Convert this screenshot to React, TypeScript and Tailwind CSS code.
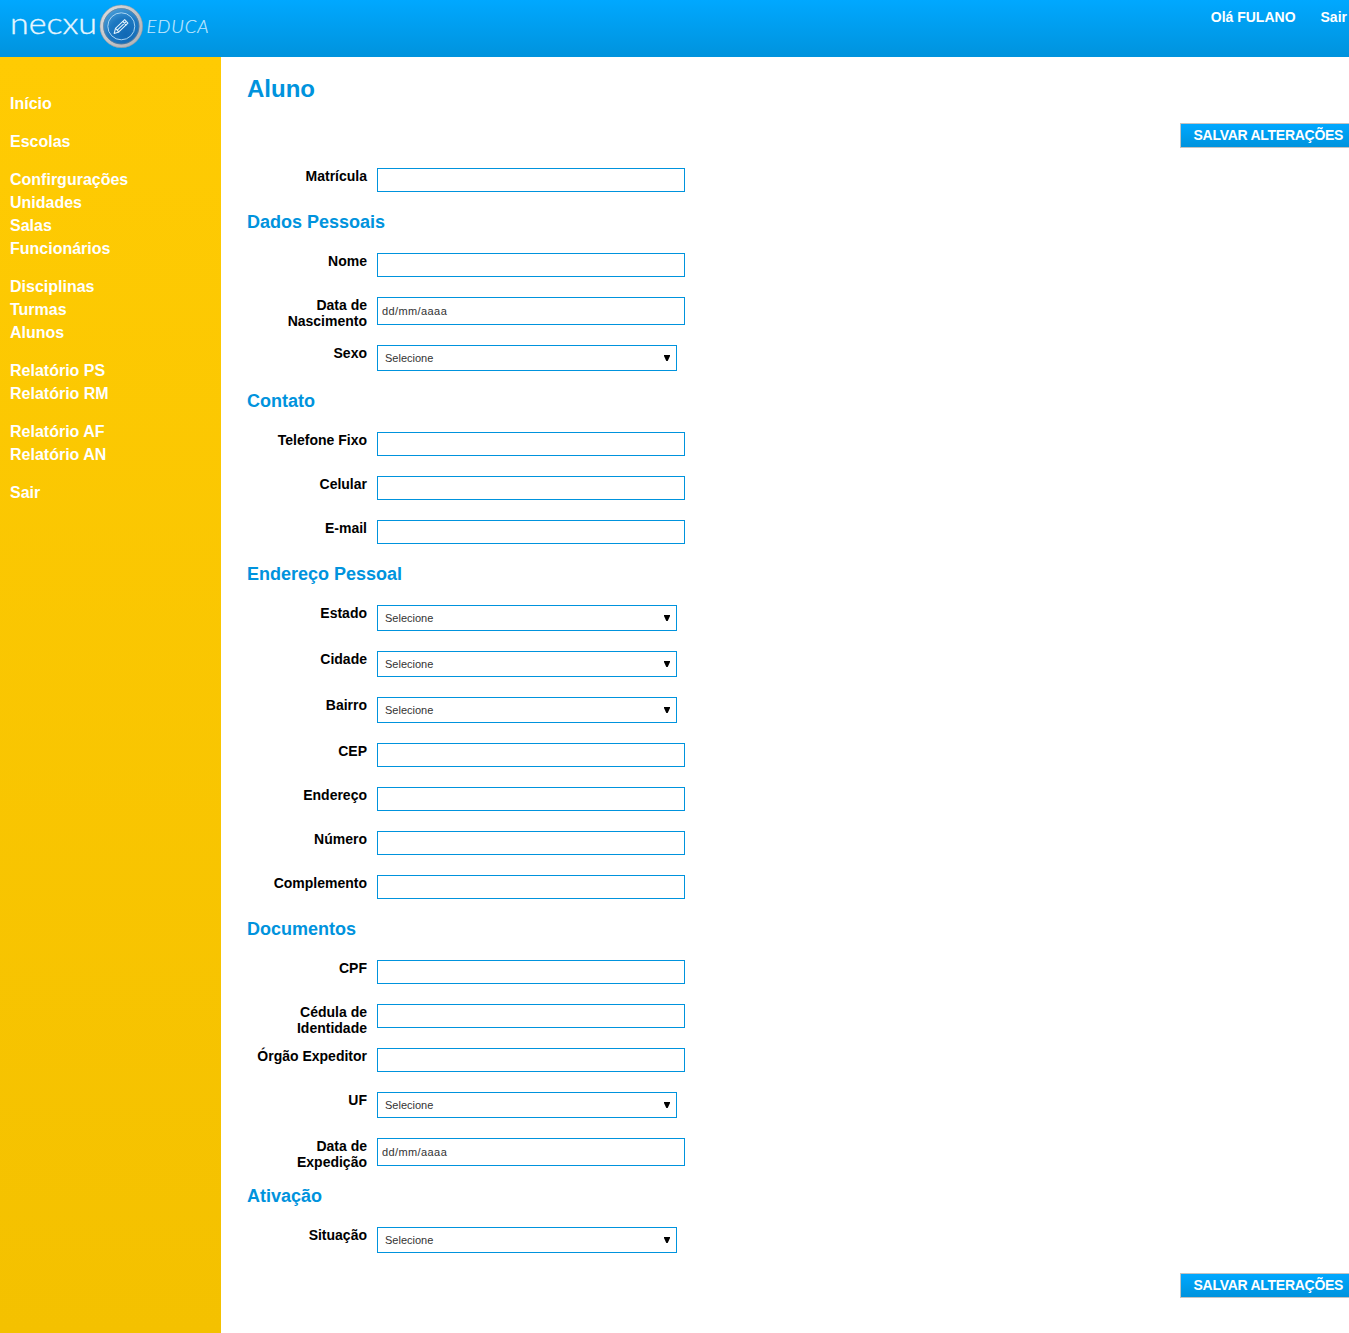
import React from "react";

type Kind = "text" | "date" | "select";
type FieldDef = { label: string; kind?: Kind };

const menu: string[][] = [
  ["Início"],
  ["Escolas"],
  ["Confirgurações", "Unidades", "Salas", "Funcionários"],
  ["Disciplinas", "Turmas", "Alunos"],
  ["Relatório PS", "Relatório RM"],
  ["Relatório AF", "Relatório AN"],
  ["Sair"],
];

const sections: { title?: string; fields: FieldDef[] }[] = [
  { fields: [{ label: "Matrícula" }] },
  {
    title: "Dados Pessoais",
    fields: [
      { label: "Nome" },
      { label: "Data de Nascimento", kind: "date" },
      { label: "Sexo", kind: "select" },
    ],
  },
  {
    title: "Contato",
    fields: [{ label: "Telefone Fixo" }, { label: "Celular" }, { label: "E-mail" }],
  },
  {
    title: "Endereço Pessoal",
    fields: [
      { label: "Estado", kind: "select" },
      { label: "Cidade", kind: "select" },
      { label: "Bairro", kind: "select" },
      { label: "CEP" },
      { label: "Endereço" },
      { label: "Número" },
      { label: "Complemento" },
    ],
  },
  {
    title: "Documentos",
    fields: [
      { label: "CPF" },
      { label: "Cédula de Identidade" },
      { label: "Órgão Expeditor" },
      { label: "UF", kind: "select" },
      { label: "Data de Expedição", kind: "date" },
    ],
  },
  { title: "Ativação", fields: [{ label: "Situação", kind: "select" }] },
];

function Logo() {
  return (
    <svg width="221" height="57" viewBox="0 0 221 57" className="shrink-0">
      <defs>
        <linearGradient id="rim" x1="0" y1="0" x2="1" y2="1">
          <stop offset="0" stopColor="#dededf" />
          <stop offset="0.5" stopColor="#c4c5c8" />
          <stop offset="1" stopColor="#b0b1b5" />
        </linearGradient>
        <radialGradient id="disc" cx="0.62" cy="0.72" r="0.72">
          <stop offset="0" stopColor="#1068b4" />
          <stop offset="0.6" stopColor="#1d78c1" />
          <stop offset="1" stopColor="#4a9ed8" />
        </radialGradient>
      </defs>
      <text
        x="10"
        y="34"
        textLength="87"
        lengthAdjust="spacingAndGlyphs"
        fill="#e6f6ff"
        stroke="#e6f6ff"
        strokeWidth="0.35"
        className="font-[Lato] text-[28.5px] font-light"
      >
        necxu
      </text>
      <circle cx="121.3" cy="26.3" r="19.7" fill="url(#disc)" stroke="url(#rim)" strokeWidth="3.4" />
      <circle cx="121.3" cy="26.3" r="21.3" fill="none" stroke="#8f9196" strokeWidth="0.5" />
      <circle cx="121.3" cy="26.3" r="17.7" fill="none" stroke="#6a7f96" strokeWidth="0.7" />
      <circle cx="121.3" cy="26.3" r="13.5" fill="none" stroke="#a9d5f3" strokeWidth="1" />
      <g fill="none" stroke="#e2f2fc" strokeWidth="1.1" strokeLinejoin="round" strokeLinecap="round">
        <path d="M114.2 33.4l1.3-5 9.2-8.7 3.2 3.4-9.1 8.8z" />
        <path d="M115.5 28.4l3.3 3.5M117.3 30.2l8.6-8.4M122.9 21.5l3.2 3.4" />
      </g>
      <text
        x="146.5"
        y="33"
        textLength="62"
        lengthAdjust="spacing"
        fill="#c5e9ff"
        stroke="#c5e9ff"
        strokeWidth="0.2"
        className="font-[Lato] text-[18.5px] font-light italic"
      >
        EDUCA
      </text>
    </svg>
  );
}

function SaveButton() {
  return (
    <div className="flex justify-end">
      <button className="-mr-px h-[25px] w-[170px] border border-[#c3c3c3] bg-linear-to-b from-[#00a8ff] to-[#0093dd] pl-[12.5px] text-left text-[14px] leading-[23px] font-bold tracking-[-0.27px] whitespace-nowrap text-white">
        SALVAR ALTERAÇÕES
      </button>
    </div>
  );
}

function Control({ kind = "text" }: { kind?: Kind }) {
  if (kind === "select") {
    return (
      <div className="relative h-[26px] w-[300px]">
        <select className="block h-full w-full appearance-none border border-[#0093dd] bg-white px-[7px] text-[11px] text-[#333]">
          <option>Selecione</option>
        </select>
        <svg className="pointer-events-none absolute top-[10px] right-[7px]" width="6" height="6" viewBox="0 0 6 6">
          <path d="M0 0h6v1L3.7 6H2.3L0 1z" />
        </svg>
      </div>
    );
  }
  if (kind === "date") {
    return (
      <input
        placeholder="dd/mm/aaaa"
        className="block h-7 w-[308px] border border-[#0093dd] bg-white px-1 text-[11px] tracking-[0.4px] placeholder:text-[#333]"
      />
    );
  }
  return <input className="block h-6 w-[308px] border border-[#0093dd] bg-white px-1 text-[11px]" />;
}

function Field({ label, kind }: FieldDef) {
  return (
    <div className="mb-5 flex items-start">
      <label className="-mb-4 w-[120px] text-right text-[14px] leading-4 font-bold text-black">{label}</label>
      <div className="ml-[10px]">
        <Control kind={kind} />
      </div>
    </div>
  );
}

export default function App() {
  return (
    <div className="flex h-[1333px] flex-col overflow-hidden bg-white font-['Liberation_Sans',Arial,sans-serif]">
      <header className="flex h-[57px] shrink-0 justify-between bg-linear-to-b from-[#00a8ff] to-[#0093dd]">
        <Logo />
        <nav className="flex gap-[25px] pt-[9px] pr-[2px] text-[14px] leading-4 font-bold text-white">
          <a>Olá FULANO</a>
          <a>Sair</a>
        </nav>
      </header>
      <div className="flex flex-1">
        <aside className="flex w-[221px] shrink-0 flex-col gap-[15px] bg-linear-to-b from-[#ffcb03] to-[#f4c100] pt-[35px] pl-[10px] text-[16px] leading-[23px] font-bold text-white">
          {menu.map((group) => (
            <ul key={group[0]}>
              {group.map((item) => (
                <li key={item}>{item}</li>
              ))}
            </ul>
          ))}
        </aside>
        <main className="flex-1 pt-[18px] pl-[26px]">
          <h1 className="mb-5 text-[24px] leading-7 font-bold text-[#0093dd]">Aluno</h1>
          <SaveButton />
          <form className="pt-5">
            {sections.map((section) => (
              <section key={section.fields[0].label}>
                {section.title && (
                  <h2 className="mb-5 text-[18px] leading-[21px] font-bold text-[#0093dd]">{section.title}</h2>
                )}
                {section.fields.map((field) => (
                  <Field key={field.label} {...field} />
                ))}
              </section>
            ))}
          </form>
          <SaveButton />
        </main>
      </div>
    </div>
  );
}
